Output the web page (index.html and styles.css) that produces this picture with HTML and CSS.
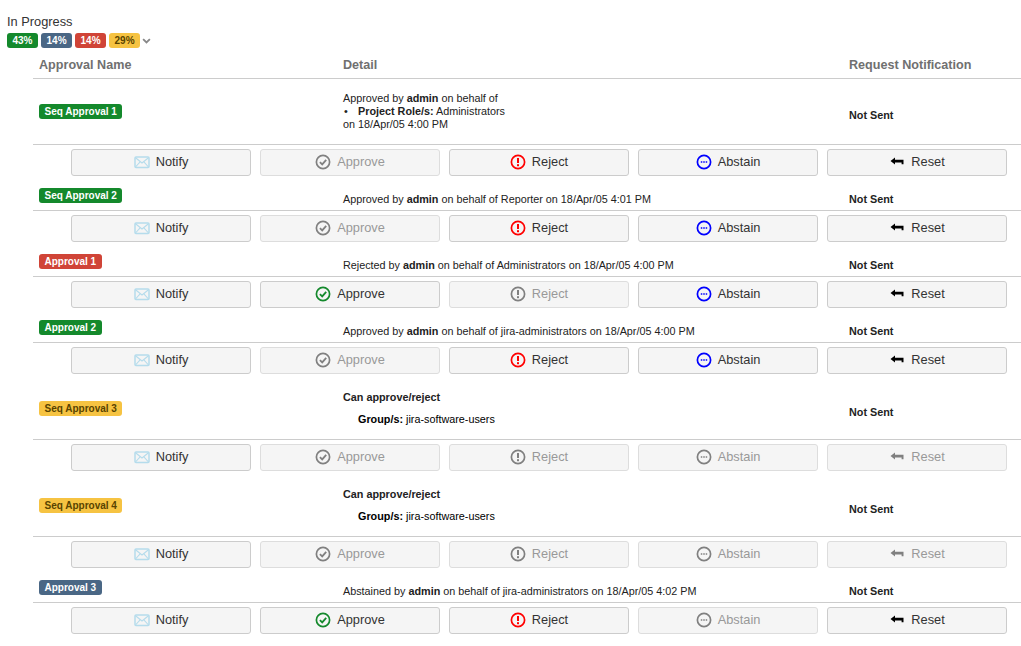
FILE: index.html
```html
<!DOCTYPE html>
<html lang="en">
<head>
    <meta charset="UTF-8">
    <title>Approvals</title>
    <link rel="stylesheet" href="styles.css">
</head>
<body>
    <svg class="sprites" width="0" height="0">
        <symbol id="i-mail" viewBox="0 0 16 16">
            <rect x="1" y="3" width="14" height="10.5" rx="1" fill="none" stroke="currentColor" stroke-width="1.5"/>
            <path d="M1.5 3.8 8 9l6.5-5.2M1.5 13l4.6-5.2M14.5 13 9.9 7.8" fill="none" stroke="currentColor" stroke-width="1.1"/>
        </symbol>
        <symbol id="i-check" viewBox="0 0 16 16">
            <circle cx="8" cy="8" r="6.6" fill="none" stroke="currentColor" stroke-width="1.7"/>
            <path d="M4.9 8.2 7.2 10.4 11.2 5.9" fill="none" stroke="currentColor" stroke-width="1.8"/>
        </symbol>
        <symbol id="i-excl" viewBox="0 0 16 16">
            <circle cx="8" cy="8" r="6.6" fill="none" stroke="currentColor" stroke-width="1.7"/>
            <path d="M8 4v5" fill="none" stroke="currentColor" stroke-width="2"/>
            <rect x="7" y="10.2" width="2" height="2" fill="currentColor"/>
        </symbol>
        <symbol id="i-dots" viewBox="0 0 16 16">
            <circle cx="8" cy="8" r="6.6" fill="none" stroke="currentColor" stroke-width="1.7"/>
            <path d="M4.8 7.2h1.5v1.6H4.8zM7.25 7.2h1.5v1.6h-1.5zM9.7 7.2h1.5v1.6H9.7z" fill="currentColor"/>
        </symbol>
        <symbol id="i-back" viewBox="0 0 16 16">
            <path d="M1.5 7 6 3.6v2.2h8.5v4.4H12.6V8.4H6v2z" fill="currentColor"/>
        </symbol>
    </svg>

    <div class="status">
        <div class="status-title">In Progress</div>
        <div class="status-bar">
            <span class="pill green">43%</span>
            <span class="pill blue">14%</span>
            <span class="pill red">14%</span>
            <span class="pill yellow">29%</span>
            <svg class="chevron" viewBox="0 0 12 8" width="9" height="6"><path d="M1.5 1.5 6 6l4.5-4.5" fill="none" stroke="#888" stroke-width="2.4"/></svg>
        </div>
    </div>

    <div class="approvals">
        <div class="row head">
            <div>Approval Name</div>
            <div>Detail</div>
            <div>Request Notification</div>
        </div>

        <div class="row first">
            <div><span class="pill green">Seq Approval 1</span></div>
            <div class="detail">
                Approved by <b>admin</b> on behalf of
                <ul><li><b>Project Role/s:</b> Administrators</li></ul>
                on 18/Apr/05 4:00 PM
            </div>
            <div class="notif">Not Sent</div>
        </div>
        <div class="actions">
            <button><svg class="mail"><use href="#i-mail"/></svg>Notify</button>
            <button class="off"><svg><use href="#i-check"/></svg>Approve</button>
            <button><svg class="c-red"><use href="#i-excl"/></svg>Reject</button>
            <button><svg class="c-blue"><use href="#i-dots"/></svg>Abstain</button>
            <button><svg><use href="#i-back"/></svg>Reset</button>
        </div>

        <div class="row compact">
            <div><span class="pill green">Seq Approval 2</span></div>
            <div class="detail">Approved by <b>admin</b> on behalf of Reporter on 18/Apr/05 4:01 PM</div>
            <div class="notif">Not Sent</div>
        </div>
        <div class="actions">
            <button><svg class="mail"><use href="#i-mail"/></svg>Notify</button>
            <button class="off"><svg><use href="#i-check"/></svg>Approve</button>
            <button><svg class="c-red"><use href="#i-excl"/></svg>Reject</button>
            <button><svg class="c-blue"><use href="#i-dots"/></svg>Abstain</button>
            <button><svg><use href="#i-back"/></svg>Reset</button>
        </div>

        <div class="row compact">
            <div><span class="pill red">Approval 1</span></div>
            <div class="detail">Rejected by <b>admin</b> on behalf of Administrators on 18/Apr/05 4:00 PM</div>
            <div class="notif">Not Sent</div>
        </div>
        <div class="actions">
            <button><svg class="mail"><use href="#i-mail"/></svg>Notify</button>
            <button><svg class="c-green"><use href="#i-check"/></svg>Approve</button>
            <button class="off"><svg><use href="#i-excl"/></svg>Reject</button>
            <button><svg class="c-blue"><use href="#i-dots"/></svg>Abstain</button>
            <button><svg><use href="#i-back"/></svg>Reset</button>
        </div>

        <div class="row compact">
            <div><span class="pill green">Approval 2</span></div>
            <div class="detail">Approved by <b>admin</b> on behalf of jira-administrators on 18/Apr/05 4:00 PM</div>
            <div class="notif">Not Sent</div>
        </div>
        <div class="actions">
            <button><svg class="mail"><use href="#i-mail"/></svg>Notify</button>
            <button class="off"><svg><use href="#i-check"/></svg>Approve</button>
            <button><svg class="c-red"><use href="#i-excl"/></svg>Reject</button>
            <button><svg class="c-blue"><use href="#i-dots"/></svg>Abstain</button>
            <button><svg><use href="#i-back"/></svg>Reset</button>
        </div>

        <div class="row tall">
            <div><span class="pill yellow">Seq Approval 3</span></div>
            <div class="detail">
                <b>Can approve/reject</b>
                <div class="group"><b>Group/s:</b> jira-software-users</div>
            </div>
            <div class="notif">Not Sent</div>
        </div>
        <div class="actions">
            <button><svg class="mail"><use href="#i-mail"/></svg>Notify</button>
            <button class="off"><svg><use href="#i-check"/></svg>Approve</button>
            <button class="off"><svg><use href="#i-excl"/></svg>Reject</button>
            <button class="off"><svg><use href="#i-dots"/></svg>Abstain</button>
            <button class="off"><svg><use href="#i-back"/></svg>Reset</button>
        </div>

        <div class="row tall">
            <div><span class="pill yellow">Seq Approval 4</span></div>
            <div class="detail">
                <b>Can approve/reject</b>
                <div class="group"><b>Group/s:</b> jira-software-users</div>
            </div>
            <div class="notif">Not Sent</div>
        </div>
        <div class="actions">
            <button><svg class="mail"><use href="#i-mail"/></svg>Notify</button>
            <button class="off"><svg><use href="#i-check"/></svg>Approve</button>
            <button class="off"><svg><use href="#i-excl"/></svg>Reject</button>
            <button class="off"><svg><use href="#i-dots"/></svg>Abstain</button>
            <button class="off"><svg><use href="#i-back"/></svg>Reset</button>
        </div>

        <div class="row compact">
            <div><span class="pill blue">Approval 3</span></div>
            <div class="detail">Abstained by <b>admin</b> on behalf of jira-administrators on 18/Apr/05 4:02 PM</div>
            <div class="notif">Not Sent</div>
        </div>
        <div class="actions">
            <button><svg class="mail"><use href="#i-mail"/></svg>Notify</button>
            <button><svg class="c-green"><use href="#i-check"/></svg>Approve</button>
            <button><svg class="c-red"><use href="#i-excl"/></svg>Reject</button>
            <button class="off"><svg><use href="#i-dots"/></svg>Abstain</button>
            <button><svg><use href="#i-back"/></svg>Reset</button>
        </div>
    </div>
</body>
</html>
```

FILE: styles.css
```css
body {
    margin: 0;
    padding: 14px 0 0 7px;
    font-family: "Liberation Sans", Arial, sans-serif;
    font-size: 11px;
    color: #333;
    background-color: white;
    overflow: hidden;
}
.sprites {
    position: absolute;
}
.status-title {
    font-size: 12.8px;
    line-height: 16px;
    color: #333;
}
.status-bar {
    display: flex;
    align-items: center;
    gap: 3px;
    height: 15px;
    margin-top: 3px;
}
.chevron {
    margin-left: -1px;
}
.pill {
    display: inline-block;
    padding: 0 5.5px;
    font-size: 10px;
    line-height: 15px;
    font-weight: bold;
    border-radius: 3px;
    color: white;
}
.green {
    background-color: #14892c;
}
.blue {
    background-color: #4a6785;
}
.red {
    background-color: #d04437;
}
.yellow {
    background-color: #f6c342;
    color: #594300;
}
.approvals {
    margin-left: 26px;
}
.row {
    display: grid;
    grid-template-columns: 304px 506px 1fr;
    padding-left: 6px;
    border-bottom: 1px solid #ccc;
    box-sizing: border-box;
}
.head {
    height: 31px;
    padding-top: 4px;
    align-items: center;
    font-size: 12.6px;
    font-weight: bold;
    color: #707070;
}
.first {
    height: 66px;
    align-items: center;
}
.first .notif {
    padding-top: 6px;
}
.compact {
    height: 35px;
    align-items: end;
    padding-bottom: 4px;
}
.compact .pill {
    margin-bottom: 3px;
}
.compact .notif {
    margin-bottom: 1px;
}
.tall {
    height: 66px;
    padding-top: 4px;
    align-items: center;
}
.tall .notif {
    padding-top: 6px;
}
.detail {
    font-size: 10.8px;
    line-height: 13px;
    color: #222;
}
.detail ul {
    margin: 0;
    padding-left: 15px;
    list-style: none;
}
.detail li::before {
    content: "•";
    display: inline-block;
    width: 14px;
    margin-left: -14px;
}
.group {
    margin: 9px 0 0 15px;
    color: black;
}
.notif {
    font-size: 10.8px;
    font-weight: bold;
    color: #222;
}
.actions {
    display: flex;
    gap: 9px;
    padding: 4px 14px 0 38px;
}
button {
    display: flex;
    align-items: center;
    justify-content: center;
    gap: 6px;
    width: 180px;
    height: 27px;
    padding: 0 0 2px;
    background-color: #f5f5f5;
    border: 1px solid #ccc;
    border-radius: 3px;
    font-family: inherit;
    font-size: 12.8px;
    color: #333;
}
button svg {
    width: 16px;
    height: 16px;
    color: black;
}
button .mail {
    color: #b5dcec;
}
button .c-red {
    color: #f00;
}
button .c-blue {
    color: #00f;
}
button .c-green {
    color: #14892c;
}
.off {
    color: #999;
    border-color: #ddd;
}
.off svg {
    color: #808080;
}
```
